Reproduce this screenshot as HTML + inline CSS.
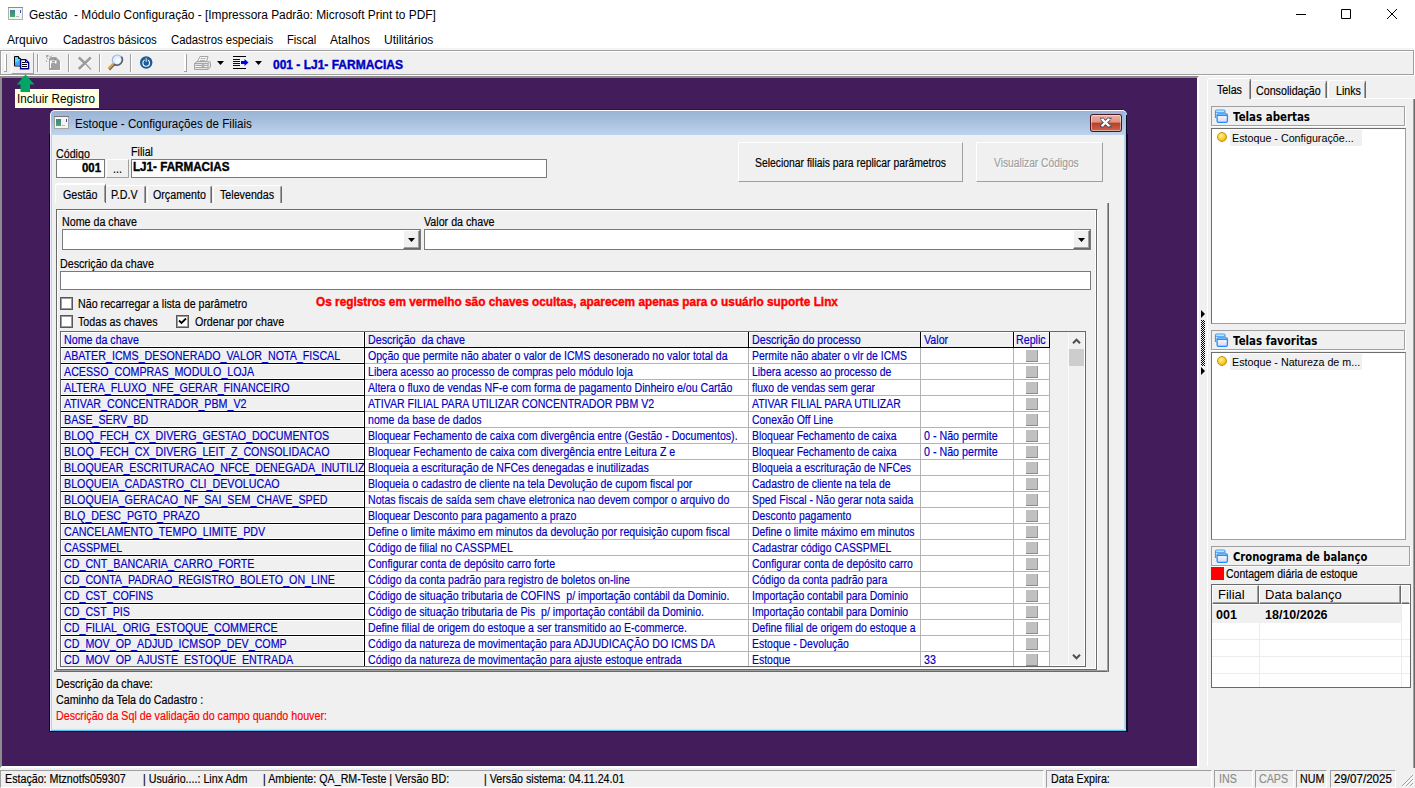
<!DOCTYPE html>
<html lang="pt-BR"><head><meta charset="utf-8"><title>Gestão - Módulo Configuração</title>
<style>
*{box-sizing:border-box}
html,body{margin:0;padding:0}
body{width:1415px;height:788px;overflow:hidden;background:#f0f0f0;position:relative;font-family:"Liberation Sans",sans-serif;font-size:12px;color:#000}
.a{position:absolute}
.s{position:absolute;white-space:pre;font-size:12px;line-height:16px;transform-origin:0 0}
.m{position:absolute;white-space:pre;font-size:12.5px;line-height:14px;transform-origin:0 0;transform:scaleX(.855);color:#000}
.b{color:#0000c4}
.bd{font-weight:bold}
.m{-webkit-text-stroke:.18px}
.m.bd{transform:scaleX(.95);-webkit-text-stroke:.4px}
#tbtxt{transform:scaleX(.96)}#redt{transform:scaleX(.945)}#lj1{transform:scaleX(.932)}#c001{transform:scaleX(.91)}#bsel{transform:scaleX(.83)}#bvis{transform:scaleX(.82)}#apptitle{transform:scaleX(.992)}#wtitle{transform:scaleX(.968)}#tip{transform:scaleX(.975)}
.sep{position:absolute;width:2px;top:54px;height:18px;border-left:1px solid #a0a0a0;border-right:1px solid #fff}
#mdi{left:0;top:76px;width:1199px;height:692px;background:#421c5b;border:2px solid #fff;border-top-color:#8c8c8c;border-left-color:#8c8c8c}
/* child window */
#win{left:50px;top:110px;width:1077px;height:621px;border-radius:5px 5px 0 0;background:#b9d1ea;overflow:hidden}
#ttl{left:0;top:0;width:1077px;height:25px;background:linear-gradient(#9ab4d4 0,#a6bfdd 40%,#bdd4ed 100%);border-top:1px solid #fff;border-left:1px solid #f4f8fc;border-radius:5px 5px 0 0}
#cli{left:2px;top:25px;width:1072px;height:594px;background:#f0f0f0}
.inp{position:absolute;background:#fff;border:1px solid #7a7a7a;border-right-color:#7a7a7a;border-bottom-color:#7a7a7a}
.btn{position:absolute;background:#f0f0f0;border:1px solid #fff;border-right-color:#a0a0a0;border-bottom-color:#a0a0a0}
.chk{position:absolute;width:13px;height:13px;background:#fff;border:1px solid #585858;box-shadow:inset 0 0 0 1px #9c9c9c}
/* grid */
#grid{left:60px;top:331px;width:1026px;height:336px;background:#f0f0f0;border:1px solid #696969;overflow:hidden}
.r{position:absolute;left:0;height:16px;width:991px}
.c{position:absolute;top:0;height:16px;overflow:hidden;background:#fff;border-right:1px solid #b4b4b4;border-bottom:1px solid #b4b4b4}
.c .m{top:1px;left:3px}
.c1{left:0;width:304px;background:#f0f0f0;border-right:1px solid #000;border-bottom:1px solid #000;box-shadow:inset 0 0 0 1px #fff}
.c1 .m{left:3px}
.c2{left:304px;width:384px}
.c2 .m{transform:scaleX(.847)}
.c3 .m{transform:scaleX(.835)}
.c3{left:688px;width:172px}
.c4{left:860px;width:93px}
.c5{left:953px;width:36px}
.ck{position:absolute;left:12px;top:2px;width:12px;height:12px;background:#c0c0c0;border-right:1px solid #9a9a9a;border-bottom:1px solid #8a8a8a}
.h{position:absolute;top:0;height:16px;background:#f0f0f0;border-right:1px solid #000;border-bottom:1px solid #000;overflow:hidden;box-shadow:inset 1px 1px 0 #fff}
.h .m{top:1px;left:3px}
/* right panel */
.hd{position:absolute;left:1211px;width:194px;height:20px;background:#f0f0f0;border:1px solid #a0a0a0;box-shadow:1px 1px 0 #fff}
.hd b{position:absolute;left:21px;top:2px;font-size:12px;line-height:16px;white-space:pre;font-family:"DejaVu Sans","Liberation Sans",sans-serif;font-weight:bold;transform-origin:0 0;transform:scaleX(.855)}
.lst{position:absolute;left:1211px;width:195px;background:#fff;border:1px solid #6d6d6d;border-right-color:#a0a0a0;border-bottom-color:#a0a0a0}
.it{position:absolute;left:18px;top:1px;width:132px;height:16px;background:#f0f0f0}
.it span{position:absolute;left:2px;top:0;font-size:11px;line-height:16px;white-space:pre;transform-origin:0 0;transform:scaleX(.975)}
.ball{position:absolute;left:5px;top:3px;width:10px;height:10px;border-radius:50%;background:radial-gradient(circle at 40% 35%,#fff3a0 0,#ffd22e 45%,#e0a000 100%);border:1px solid #c89010}
.sp{position:absolute;background:#f0f0f0;border:1px solid #a0a0a0;border-right-color:#fff;border-bottom-color:#fff;height:17px;top:771px}
.sp .m{top:1px;left:4px}
</style></head><body>
<!-- title bar -->
<div class="a" style="left:0;top:0;width:1415px;height:50px;background:#fff;border-bottom:2px solid #f4f4f4"></div>
<svg class="a" style="left:8px;top:7px" width="15" height="13" viewBox="0 0 15 13"><rect x=".5" y=".5" width="14" height="12" fill="#f4f4f4" stroke="#b0b0b0"/><rect x="0" y="0" width="15" height="1" fill="#8c8c8c"/><defs><linearGradient id="ig" x1="0" y1="0" x2="0" y2="1"><stop offset="0" stop-color="#3b7f9c"/><stop offset="1" stop-color="#4da860"/></linearGradient></defs><rect x="2" y="3" width="5" height="7" fill="url(#ig)"/><rect x="12" y="3" width="1" height="3" fill="#2a58b8"/><rect x="8" y="9" width="3" height="1" fill="#b8b8b8"/></svg>
<span class="s" id="apptitle" style="left:29px;top:7px">Gestão  - Módulo Configuração - [Impressora Padrão: Microsoft Print to PDF]</span>
<svg class="a" style="left:1290px;top:4px" width="120" height="20" viewBox="0 0 120 20"><path d="M6 10.500h10M51.500 5.500h9v9h-9zM97 5l10 10M107 5l-10 10" fill="none" stroke="#000" stroke-width="1"/></svg>
<!-- menu -->
<span class="s" style="left:7px;top:32px">Arquivo</span>
<span class="s" style="left:63px;top:32px;transform:scaleX(.95)">Cadastros básicos</span>
<span class="s" style="left:171px;top:32px;transform:scaleX(.945)">Cadastros especiais</span>
<span class="s" style="left:287px;top:32px;transform:scaleX(.93)">Fiscal</span>
<span class="s" style="left:330px;top:32px">Atalhos</span>
<span class="s" style="left:384px;top:32px">Utilitários</span>
<!-- toolbar -->
<div class="a" style="left:0;top:50px;width:1415px;height:28px;background:#f0f0f0;border-top:1px solid #a0a0a0;border-left:1px solid #a0a0a0"></div>
<div class="a" style="left:1px;top:51px;width:1414px;height:1px;background:#fff"></div>
<div class="a" style="left:1px;top:51px;width:1px;height:23px;background:#fff"></div>
<div class="a" style="left:0;top:74px;width:1414px;height:1px;background:#a0a0a0"></div>
<div class="a" style="left:1413px;top:50px;width:1px;height:25px;background:#a0a0a0"></div>
<div class="a" style="left:1414px;top:50px;width:1px;height:26px;background:#fff"></div>
<div class="a" style="left:0;top:75px;width:1415px;height:1px;background:#fff"></div>
<!-- toolbar grips -->
<div class="a" style="left:4px;top:54px;width:3px;height:18px;background:#fff;border-right:1px solid #a0a0a0;border-bottom:1px solid #a0a0a0"></div>
<div class="a" style="left:184px;top:54px;width:3px;height:18px;background:#fff;border-right:1px solid #a0a0a0;border-bottom:1px solid #a0a0a0"></div>
<!-- hot button -->
<div class="a" style="left:11px;top:52px;width:23px;height:22px;border:1px solid #fff;border-right-color:#a0a0a0;border-bottom-color:#a0a0a0"></div>
<svg class="a" style="left:13px;top:55px" width="18" height="16" viewBox="0 0 18 16"><path d="M1.500 1.500h4l2 2v7.500h-6z" fill="#4fe0ff" stroke="#000"/><path d="M2 8l5-3v5.500h-5z" fill="#48a4f4"/><path d="M5.500 1.500v2h2" fill="#fff" stroke="#000"/><path d="M7.600 4.600h5l3 3v6.100h-8z" fill="#fff" stroke="#00008c" stroke-width="1.400"/><path d="M12.500 4.500v3h3" fill="none" stroke="#00008c" stroke-width="1"/><path d="M9 7.500h3M9 9.500h5M9 11.500h5" stroke="#000" stroke-width="1"/></svg>
<div class="sep" style="left:37px"></div>
<svg class="a" style="left:45px;top:54px" width="17" height="18" viewBox="0 0 17 18"><path d="M5 17V5l2.500-1h4.500l4 4v9z" fill="#fff"/><path d="M4 16V4l2.500-1h4.500l4 4v9z" fill="#a0a0a0"/><path d="M5 14V6.500h6.500v3h-1.500v-1h-3.500v1h-.5v4.500z" fill="#fff"/><path d="M7 7.500h3" stroke="#a0a0a0"/><path d="M9 4.500h2v1.500h-2z" fill="#8c8c8c"/><path d="M1.500 1.500h1.500v1h-1.500zM4 1.500l1.500 1.500M1.500 3.500l1.500 1.500M1.500 6.500v1.500M7.500 1.500l-1 1" stroke="#a0a0a0" fill="none"/></svg>
<div class="sep" style="left:68px"></div>
<svg class="a" style="left:77px;top:56px" width="16" height="16" viewBox="0 0 16 16"><path d="M14.500 2.500l-12 11.500M2.500 2.500l6 5.500" stroke="#fff" stroke-width="2.600" fill="none"/><path d="M13.800 1.500l-12 11.500M1.800 1.500l6.200 5.700" stroke="#9c9c9c" stroke-width="2.600" fill="none"/><path d="M8 7.200l6 6.300" stroke="#9c9c9c" stroke-width="1.300" fill="none"/></svg>
<div class="sep" style="left:99px"></div>
<svg class="a" style="left:106px;top:54px" width="18" height="18" viewBox="0 0 18 18"><path d="M3.200 15.600l5.300-5.400" stroke="#6c6c80" stroke-width="2.600" stroke-linecap="butt"/><path d="M2.400 14.600l5.300-5.400" stroke="#f4a030" stroke-width="2.200" stroke-linecap="butt"/><circle cx="11.300" cy="6" r="5" fill="#d8f0ff" stroke="#a8b4e0" stroke-width="1.200"/><path d="M15.400 2.600A5.400 5.400 0 0 1 7.900 10.100" fill="none" stroke="#585868" stroke-width="1.500"/><circle cx="11.800" cy="6.600" r="2.600" fill="#f4fcff"/></svg>
<div class="sep" style="left:130px"></div>
<svg class="a" style="left:139px;top:55px" width="15" height="15" viewBox="0 0 15 15"><circle cx="7.200" cy="7.500" r="6.200" fill="#1c5a98"/><circle cx="7.200" cy="8" r="3.300" fill="none" stroke="#fff" stroke-width="1.100"/><path d="M7.200 2.500v5.500" stroke="#1c5a98" stroke-width="3"/><path d="M7.200 2.800v4.400" stroke="#cfe4f4" stroke-width="1"/></svg>
<svg class="a" style="left:193px;top:55px" width="19" height="16" viewBox="0 0 19 16"><path d="M4.500 6.500l2.500-5h8l-1.500 5" fill="#f6f6f6" stroke="#a4a4a4"/><path d="M7.500 3.500h5M7 5.500h5" stroke="#b4b4b4"/><path d="M1.500 8.500l2.500-2h11.500l2 1.500v4l-2.500 2.500h-13.500z" fill="#e4e4e4" stroke="#a4a4a4"/><path d="M1.500 8.500h13.500l2.500-2M15 8.500v6" fill="none" stroke="#a4a4a4"/><path d="M2.500 10.500h12M2.500 12.500h12" stroke="#a4a4a4"/><path d="M9 9h2v3h-2z" fill="#b0b0b0"/><path d="M2.500 11.500h5M12 11.500h2" stroke="#fff"/></svg>
<svg class="a" style="left:217px;top:61px" width="7" height="4" viewBox="0 0 7 4"><path d="M0 0h7l-3.500 4z" fill="#000"/></svg>
<svg class="a" style="left:233px;top:56px" width="16" height="14" viewBox="0 0 16 14"><path d="M0 .5h13M0 12.500h13" stroke="#000"/><path d="M0 3.500h7M0 5.500h7M0 7.500h7M0 9.500h7" stroke="#00008c"/><path d="M8 5h3.500v-2l4 3.500-4 3.500v-2h-3.500z" fill="#0000f0"/></svg>
<svg class="a" style="left:255px;top:61px" width="7" height="4" viewBox="0 0 7 4"><path d="M0 0h7l-3.500 4z" fill="#000"/></svg>
<span class="m b bd" id="tbtxt" style="left:273px;top:58px">001 - LJ1- FARMACIAS</span>
<!-- MDI -->
<div class="a" id="mdi"></div>
<div class="a" style="left:15px;top:89px;width:84px;height:19px;background:#ffffe1"></div>
<span class="s" style="left:17px;top:91px" id="tip">Incluir Registro</span>
<svg class="a" style="left:16px;top:74px" width="20" height="18" viewBox="0 0 20 18"><path d="M9.500 .5L18.500 10.500H14V18H4.500V10.500H.8z" fill="#03a564"/></svg>
<!-- child window -->
<div class="a" style="left:49px;top:134px;width:1079px;height:598px;background:#0c0c20"></div>
<div class="a" style="left:54px;top:109px;width:1069px;height:1px;background:#2c1440"></div>
<div class="a" id="win">
 <div class="a" id="ttl"></div>
 <div class="a" style="left:1075px;top:3px;width:1px;height:618px;background:#6ee0ff"></div>
 <div class="a" style="left:1076px;top:5px;width:1px;height:616px;background:#0c0c20"></div>
 <div class="a" style="left:0;top:619px;width:1076px;height:1px;background:#c6e4f6"></div>
 <div class="a" style="left:0;top:620px;width:1076px;height:1px;background:#54c4ee"></div>
 <div class="a" style="left:0;top:25px;width:1px;height:596px;background:#e6f0fa"></div>
 <div class="a" id="cli"></div>
</div>
<svg class="a" style="left:54px;top:116px" width="15" height="13" viewBox="0 0 15 13"><rect x=".5" y=".5" width="14" height="12" fill="#f4f4f4" stroke="#a4a4a4"/><rect x="0" y="0" width="15" height="1" fill="#787878"/><rect x="2" y="3" width="5" height="7" fill="url(#ig)"/><rect x="12" y="3" width="1" height="3" fill="#2a58b8"/><rect x="8" y="9" width="3" height="1" fill="#b8b8b8"/></svg>
<span class="s" id="wtitle" style="left:75px;top:116px">Estoque - Configurações de Filiais</span>
<!-- close button -->
<div class="a" style="left:1090px;top:114px;width:32px;height:18px;border-radius:3px;background:#4a1524"></div>
<div class="a" style="left:1091px;top:115px;width:30px;height:16px;border-radius:2px;background:linear-gradient(#eab0a4 0,#e09482 45%,#bb3e24 50%,#c9644e 100%);box-shadow:inset 0 0 0 1px rgba(255,255,255,.45)"></div>
<svg class="a" style="left:1099px;top:117px" width="14" height="12" viewBox="0 0 14 12"><path d="M2.800 2l7.400 7M10.200 2l-7.400 7" stroke="#3c4258" stroke-width="3.800" stroke-linecap="butt"/><path d="M1.200 1.500h3.400M9 1.500h3.400M1.200 9.500h3.400M9 9.500h3.400" stroke="#3c4258" stroke-width="1.400"/><path d="M3 2.200l7 6.600M10 2.200l-7 6.600" stroke="#fff" stroke-width="2.300" stroke-linecap="butt"/><path d="M2 2.200h2.800M8.600 2.200h2.800M2 8.800h2.800M8.600 8.800h2.800" stroke="#fff" stroke-width="1"/></svg>
<!-- code / filial -->
<span class="m" style="left:56px;top:147px">Código</span>
<span class="m" style="left:131px;top:145px">Filial</span>
<div class="inp" style="left:56px;top:159px;width:49px;height:19px"></div>
<span class="m bd" id="c001" style="left:82px;top:161px">001</span>
<div class="btn" style="left:106px;top:159px;width:23px;height:19px"></div>
<span class="m" style="left:113px;top:162px">...</span>
<div class="inp" style="left:131px;top:159px;width:416px;height:19px"></div>
<span class="m bd" id="lj1" style="left:133px;top:160px">LJ1- FARMACIAS</span>
<!-- big buttons -->
<div class="btn" style="left:738px;top:142px;width:225px;height:40px"></div>
<span class="m" id="bsel" style="left:755px;top:156px">Selecionar filiais para replicar parâmetros</span>
<div class="btn" style="left:976px;top:142px;width:127px;height:40px"></div>
<span class="m" id="bvis" style="left:994px;top:156px;color:#a0a0a0;text-shadow:1px 1px 0 #fff">Visualizar Códigos</span>
<!-- tabs -->
<div class="a" style="left:54px;top:670px;width:1055px;height:2px;border-top:1px solid #a0a0a0;border-bottom:1px solid #696969"></div>
<div class="a" style="left:1107px;top:203px;width:2px;height:469px;border-left:1px solid #a0a0a0;border-right:1px solid #696969"></div>
<div class="a" style="left:56px;top:209px;width:1042px;height:461px;border:1px solid #696969;border-right:1px solid #fff;border-bottom:none"></div>
<div class="a" style="left:56px;top:209px;width:1041px;height:461px;border:1px solid #696969;box-shadow:inset 0 0 0 1px #fff"></div>
<div class="a" style="left:55px;top:183px;width:51px;height:20px;background:#f0f0f0;border-top:2px solid #fff;border-left:1px solid #fff;border-right:1px solid #696969;border-radius:3px 3px 0 0"></div>
<div class="a" style="left:104px;top:186px;width:1px;height:16px;background:#a0a0a0"></div>
<div class="a" style="left:106px;top:185px;width:40px;height:18px;border-top:1px solid #fff;border-right:1px solid #696969;border-radius:3px 3px 0 0"></div>
<div class="a" style="left:144px;top:187px;width:1px;height:16px;background:#a0a0a0"></div>
<div class="a" style="left:147px;top:185px;width:65px;height:18px;border-top:1px solid #fff;border-left:1px solid #fff;border-right:1px solid #696969;border-radius:3px 3px 0 0"></div>
<div class="a" style="left:210px;top:187px;width:1px;height:16px;background:#a0a0a0"></div>
<div class="a" style="left:213px;top:185px;width:69px;height:18px;border-top:1px solid #fff;border-left:1px solid #fff;border-right:1px solid #696969;border-radius:3px 3px 0 0"></div>
<div class="a" style="left:280px;top:187px;width:1px;height:16px;background:#a0a0a0"></div>
<span class="m" style="left:63px;top:188px">Gestão</span>
<span class="m" style="left:111px;top:188px">P.D.V</span>
<span class="m" style="left:153px;top:188px">Orçamento</span>
<span class="m" style="left:220px;top:188px">Televendas</span>
<!-- filters -->
<span class="m" style="left:62px;top:215px">Nome da chave</span>
<span class="m" style="left:424px;top:215px">Valor da chave</span>
<div class="inp" style="left:62px;top:229px;width:359px;height:21px"></div>
<div class="a" style="left:403px;top:230px;width:17px;height:19px;background:#f0f0f0;border:1px solid #fff;border-right:1px solid #696969;border-bottom:1px solid #696969;box-shadow:inset -1px -1px 0 #a0a0a0"></div>
<svg class="a" style="left:408px;top:238px" width="7" height="4" viewBox="0 0 7 4"><path d="M0 0h7l-3.500 4z"/></svg>
<div class="inp" style="left:424px;top:229px;width:667px;height:21px"></div>
<div class="a" style="left:1073px;top:230px;width:17px;height:19px;background:#f0f0f0;border:1px solid #fff;border-right:1px solid #696969;border-bottom:1px solid #696969;box-shadow:inset -1px -1px 0 #a0a0a0"></div>
<svg class="a" style="left:1078px;top:238px" width="7" height="4" viewBox="0 0 7 4"><path d="M0 0h7l-3.500 4z"/></svg>
<span class="m" style="left:60px;top:257px">Descrição da chave</span>
<div class="inp" style="left:60px;top:271px;width:1031px;height:19px"></div>
<div class="chk" style="left:60px;top:297px"></div>
<span class="m" style="left:78px;top:297px">Não recarregar a lista de parâmetro</span>
<span class="m bd" id="redt" style="left:316px;top:295px;color:#ff0000">Os registros em vermelho são chaves ocultas, aparecem apenas para o usuário suporte Linx</span>
<div class="chk" style="left:60px;top:315px"></div>
<span class="m" style="left:78px;top:315px">Todas as chaves</span>
<div class="chk" style="left:176px;top:315px"></div>
<svg class="a" style="left:178px;top:317px" width="9" height="9" viewBox="0 0 9 9"><path d="M1 3.500l2.500 2.500L8 1.500" fill="none" stroke="#000" stroke-width="1.800"/></svg>
<span class="m" style="left:195px;top:315px">Ordenar por chave</span>
<!-- grid -->
<div class="a" id="grid">
 <span class="h" style="left:0;width:304px;box-shadow:inset 0 0 0 1px #fff"><span class="m b" style="left:3px">Nome da chave</span></span>
 <span class="h" style="left:304px;width:384px"><span class="m b">Descrição  da chave</span></span>
 <span class="h" style="left:688px;width:172px"><span class="m b">Descrição do processo</span></span>
 <span class="h" style="left:860px;width:93px"><span class="m b">Valor</span></span>
 <span class="h" style="left:953px;width:36px"><span class="m b" style="left:2px">Replic</span></span>
<div class="r" style="top:16px"><span class="c c1"><span class="m b">ABATER_ICMS_DESONERADO_VALOR_NOTA_FISCAL</span></span><span class="c c2"><span class="m b">Opção que permite não abater o valor de ICMS desonerado no valor total da</span></span><span class="c c3"><span class="m b">Permite não abater o vlr de ICMS</span></span><span class="c c4"><span class="m b"></span></span><span class="c c5"><i class="ck"></i></span></div>
<div class="r" style="top:32px"><span class="c c1"><span class="m b">ACESSO_COMPRAS_MODULO_LOJA</span></span><span class="c c2"><span class="m b">Libera acesso ao processo de compras pelo módulo loja</span></span><span class="c c3"><span class="m b">Libera acesso ao processo de</span></span><span class="c c4"><span class="m b"></span></span><span class="c c5"><i class="ck"></i></span></div>
<div class="r" style="top:48px"><span class="c c1"><span class="m b">ALTERA_FLUXO_NFE_GERAR_FINANCEIRO</span></span><span class="c c2"><span class="m b">Altera o fluxo de vendas NF-e com forma de pagamento Dinheiro e/ou Cartão</span></span><span class="c c3"><span class="m b">fluxo de vendas sem gerar</span></span><span class="c c4"><span class="m b"></span></span><span class="c c5"><i class="ck"></i></span></div>
<div class="r" style="top:64px"><span class="c c1"><span class="m b">ATIVAR_CONCENTRADOR_PBM_V2</span></span><span class="c c2"><span class="m b">ATIVAR FILIAL PARA UTILIZAR CONCENTRADOR PBM V2</span></span><span class="c c3"><span class="m b">ATIVAR FILIAL PARA UTILIZAR</span></span><span class="c c4"><span class="m b"></span></span><span class="c c5"><i class="ck"></i></span></div>
<div class="r" style="top:80px"><span class="c c1"><span class="m b">BASE_SERV_BD</span></span><span class="c c2"><span class="m b">nome da base de dados</span></span><span class="c c3"><span class="m b">Conexão Off Line</span></span><span class="c c4"><span class="m b"></span></span><span class="c c5"><i class="ck"></i></span></div>
<div class="r" style="top:96px"><span class="c c1"><span class="m b">BLOQ_FECH_CX_DIVERG_GESTAO_DOCUMENTOS</span></span><span class="c c2"><span class="m b">Bloquear Fechamento de caixa com divergência entre (Gestão - Documentos).</span></span><span class="c c3"><span class="m b">Bloquear Fechamento de caixa</span></span><span class="c c4"><span class="m b">0 - Não permite</span></span><span class="c c5"><i class="ck"></i></span></div>
<div class="r" style="top:112px"><span class="c c1"><span class="m b">BLOQ_FECH_CX_DIVERG_LEIT_Z_CONSOLIDACAO</span></span><span class="c c2"><span class="m b">Bloquear Fechamento de caixa com divergência entre Leitura Z e</span></span><span class="c c3"><span class="m b">Bloquear Fechamento de caixa</span></span><span class="c c4"><span class="m b">0 - Não permite</span></span><span class="c c5"><i class="ck"></i></span></div>
<div class="r" style="top:128px"><span class="c c1"><span class="m b">BLOQUEAR_ESCRITURACAO_NFCE_DENEGADA_INUTILIZADA</span></span><span class="c c2"><span class="m b">Bloqueia a escrituração de NFCes denegadas e inutilizadas</span></span><span class="c c3"><span class="m b">Bloqueia a escrituração de NFCes</span></span><span class="c c4"><span class="m b"></span></span><span class="c c5"><i class="ck"></i></span></div>
<div class="r" style="top:144px"><span class="c c1"><span class="m b">BLOQUEIA_CADASTRO_CLI_DEVOLUCAO</span></span><span class="c c2"><span class="m b">Bloqueia o cadastro de cliente na tela Devolução de cupom fiscal por</span></span><span class="c c3"><span class="m b">Cadastro de cliente na tela de</span></span><span class="c c4"><span class="m b"></span></span><span class="c c5"><i class="ck"></i></span></div>
<div class="r" style="top:160px"><span class="c c1"><span class="m b">BLOQUEIA_GERACAO_NF_SAI_SEM_CHAVE_SPED</span></span><span class="c c2"><span class="m b">Notas fiscais de saída sem chave eletronica nao devem compor o arquivo do</span></span><span class="c c3"><span class="m b">Sped Fiscal - Não gerar nota saida</span></span><span class="c c4"><span class="m b"></span></span><span class="c c5"><i class="ck"></i></span></div>
<div class="r" style="top:176px"><span class="c c1"><span class="m b">BLQ_DESC_PGTO_PRAZO</span></span><span class="c c2"><span class="m b">Bloquear Desconto para pagamento a prazo</span></span><span class="c c3"><span class="m b">Desconto pagamento</span></span><span class="c c4"><span class="m b"></span></span><span class="c c5"><i class="ck"></i></span></div>
<div class="r" style="top:192px"><span class="c c1"><span class="m b">CANCELAMENTO_TEMPO_LIMITE_PDV</span></span><span class="c c2"><span class="m b">Define o limite máximo em minutos da devolução por requisição cupom fiscal</span></span><span class="c c3"><span class="m b">Define o limite máximo em minutos</span></span><span class="c c4"><span class="m b"></span></span><span class="c c5"><i class="ck"></i></span></div>
<div class="r" style="top:208px"><span class="c c1"><span class="m b">CASSPMEL</span></span><span class="c c2"><span class="m b">Código de filial no CASSPMEL</span></span><span class="c c3"><span class="m b">Cadastrar código CASSPMEL</span></span><span class="c c4"><span class="m b"></span></span><span class="c c5"><i class="ck"></i></span></div>
<div class="r" style="top:224px"><span class="c c1"><span class="m b">CD_CNT_BANCARIA_CARRO_FORTE</span></span><span class="c c2"><span class="m b">Configurar conta de depósito carro forte</span></span><span class="c c3"><span class="m b">Configurar conta de depósito carro</span></span><span class="c c4"><span class="m b"></span></span><span class="c c5"><i class="ck"></i></span></div>
<div class="r" style="top:240px"><span class="c c1"><span class="m b">CD_CONTA_PADRAO_REGISTRO_BOLETO_ON_LINE</span></span><span class="c c2"><span class="m b">Código da conta padrão para registro de boletos on-line</span></span><span class="c c3"><span class="m b">Código da conta padrão para</span></span><span class="c c4"><span class="m b"></span></span><span class="c c5"><i class="ck"></i></span></div>
<div class="r" style="top:256px"><span class="c c1"><span class="m b">CD_CST_COFINS</span></span><span class="c c2"><span class="m b">Código de situação tributaria de COFINS  p/ importação contábil da Dominio.</span></span><span class="c c3"><span class="m b">Importação contabil para Dominio</span></span><span class="c c4"><span class="m b"></span></span><span class="c c5"><i class="ck"></i></span></div>
<div class="r" style="top:272px"><span class="c c1"><span class="m b">CD_CST_PIS</span></span><span class="c c2"><span class="m b">Código de situação tributaria de Pis  p/ importação contábil da Dominio.</span></span><span class="c c3"><span class="m b">Importação contabil para Dominio</span></span><span class="c c4"><span class="m b"></span></span><span class="c c5"><i class="ck"></i></span></div>
<div class="r" style="top:288px"><span class="c c1"><span class="m b">CD_FILIAL_ORIG_ESTOQUE_COMMERCE</span></span><span class="c c2"><span class="m b">Define filial de origem do estoque a ser transmitido ao E-commerce.</span></span><span class="c c3"><span class="m b">Define filial de origem do estoque a</span></span><span class="c c4"><span class="m b"></span></span><span class="c c5"><i class="ck"></i></span></div>
<div class="r" style="top:304px"><span class="c c1"><span class="m b">CD_MOV_OP_ADJUD_ICMSOP_DEV_COMP</span></span><span class="c c2"><span class="m b">Código da natureza de movimentação para ADJUDICAÇÃO DO ICMS DA</span></span><span class="c c3"><span class="m b">Estoque - Devolução</span></span><span class="c c4"><span class="m b"></span></span><span class="c c5"><i class="ck"></i></span></div>
<div class="r" style="top:320px"><span class="c c1"><span class="m b">CD_MOV_OP_AJUSTE_ESTOQUE_ENTRADA</span></span><span class="c c2"><span class="m b">Código da natureza de movimentação para ajuste estoque entrada</span></span><span class="c c3"><span class="m b">Estoque</span></span><span class="c c4"><span class="m b">33</span></span><span class="c c5"><i class="ck"></i></span></div> <!-- scrollbar -->
 <div class="a" style="left:1007px;top:0;width:17px;height:334px;background:#f0f0f0;border-left:1px solid #fafafa"></div>
 <div class="a" style="left:989px;top:333px;width:35px;height:1px;background:#fff"></div>
 <div class="a" style="left:1023px;top:0;width:1px;height:334px;background:#fff"></div>
 <div class="a" style="left:1008px;top:17px;width:15px;height:17px;background:#cdcdcd"></div>
 <svg class="a" style="left:1011px;top:6px" width="9" height="6" viewBox="0 0 9 6"><path d="M1 5.200l3.500-3.500L8 5.200" fill="none" stroke="#505050" stroke-width="2"/></svg>
 <svg class="a" style="left:1011px;top:322px" width="9" height="6" viewBox="0 0 9 6"><path d="M1 .8l3.500 3.500L8 .8" fill="none" stroke="#505050" stroke-width="2"/></svg>
</div>
<span class="m" style="left:56px;top:677px">Descrição da chave:</span>
<span class="m" style="left:56px;top:693px">Caminho da Tela do Cadastro :</span>
<span class="m" style="left:56px;top:709px;color:#ff0000">Descrição da Sql de validação do campo quando houver:</span>
<!-- right panel -->
<!-- splitter -->
<svg class="a" style="left:1200px;top:309px" width="6" height="70" viewBox="0 0 6 70"><defs><pattern id="dp" width="2" height="2" patternUnits="userSpaceOnUse"><rect width="1" height="1" fill="#000"/><rect x="1" y="1" width="1" height="1" fill="#000"/></pattern></defs><path d="M1 1l4 4-4 4zM1 58l4 4-4 4z" fill="#000"/><rect x="1" y="11" width="4" height="46" fill="url(#dp)"/></svg>
<!-- tabs -->
<div class="a" style="left:1413px;top:98px;width:2px;height:670px;border-left:1px solid #a0a0a0;border-right:1px solid #696969"></div>
<div class="a" style="left:1207px;top:98px;width:208px;height:668px;border-top:1px solid #fff;border-left:1px solid #fff"></div>
<div class="a" style="left:1207px;top:78px;width:44px;height:21px;background:#f0f0f0;border-top:1px solid #fff;border-left:1px solid #fff;border-right:1px solid #696969;border-radius:3px 3px 0 0"></div>
<div class="a" style="left:1249px;top:81px;width:1px;height:18px;background:#a0a0a0"></div>
<div class="a" style="left:1251px;top:80px;width:76px;height:18px;border-top:1px solid #fff;border-right:1px solid #696969;border-radius:3px 3px 0 0"></div>
<div class="a" style="left:1325px;top:83px;width:1px;height:15px;background:#a0a0a0"></div>
<div class="a" style="left:1328px;top:80px;width:38px;height:18px;border-top:1px solid #fff;border-left:1px solid #fff;border-right:1px solid #696969;border-radius:3px 3px 0 0"></div>
<div class="a" style="left:1364px;top:83px;width:1px;height:15px;background:#a0a0a0"></div>
<span class="m" style="left:1217px;top:83px">Telas</span>
<span class="m" style="left:1256px;top:84px">Consolidação</span>
<span class="m" style="left:1336px;top:84px">Links</span>
<!-- section 1 -->
<div class="hd" style="top:106px"><b>Telas abertas</b></div>
<svg class="a ico" style="left:1213px;top:108px" width="16" height="16" viewBox="0 0 16 16"><path d="M2.500 10V3.500a1.500 1.500 0 0 1 1.500-1.500h6.500a1.500 1.500 0 0 1 1.500 1.500V5" fill="none" stroke="#3a9cf6" stroke-width="1.200"/><path d="M2.500 4.300h9" stroke="#3a9cf6" stroke-width="1"/><defs><linearGradient id="wg" x1="0" y1="0" x2="0" y2="1"><stop offset="0" stop-color="#fff"/><stop offset="1" stop-color="#d4d4f6"/></linearGradient></defs><rect x="4.100" y="5.800" width="10.300" height="8.600" rx="1.600" fill="url(#wg)" stroke="#1e8ef8" stroke-width="1.300"/><path d="M4.500 7.400h9.500" stroke="#1e8ef8" stroke-width="1.200"/></svg>
<div class="lst" style="top:128px;height:196px"><i class="ball"></i><div class="it"><span>Estoque - Configuraçõe...</span></div></div>
<!-- section 2 -->
<div class="hd" style="top:330px"><b>Telas favoritas</b></div>
<svg class="a ico" style="left:1213px;top:332px" width="16" height="16" viewBox="0 0 16 16"><path d="M2.500 10V3.500a1.500 1.500 0 0 1 1.500-1.500h6.500a1.500 1.500 0 0 1 1.500 1.500V5" fill="none" stroke="#3a9cf6" stroke-width="1.200"/><path d="M2.500 4.300h9" stroke="#3a9cf6" stroke-width="1"/><defs><linearGradient id="wg" x1="0" y1="0" x2="0" y2="1"><stop offset="0" stop-color="#fff"/><stop offset="1" stop-color="#d4d4f6"/></linearGradient></defs><rect x="4.100" y="5.800" width="10.300" height="8.600" rx="1.600" fill="url(#wg)" stroke="#1e8ef8" stroke-width="1.300"/><path d="M4.500 7.400h9.500" stroke="#1e8ef8" stroke-width="1.200"/></svg>
<div class="lst" style="top:352px;height:188px"><i class="ball"></i><div class="it"><span>Estoque - Natureza de m...</span></div></div>
<!-- section 3 -->
<div class="hd" style="top:546px;width:199px"><b style="transform:scaleX(.835)">Cronograma de balanço</b></div>
<svg class="a ico" style="left:1213px;top:548px" width="16" height="16" viewBox="0 0 16 16"><path d="M2.500 10V3.500a1.500 1.500 0 0 1 1.500-1.500h6.500a1.500 1.500 0 0 1 1.500 1.500V5" fill="none" stroke="#3a9cf6" stroke-width="1.200"/><path d="M2.500 4.300h9" stroke="#3a9cf6" stroke-width="1"/><defs><linearGradient id="wg" x1="0" y1="0" x2="0" y2="1"><stop offset="0" stop-color="#fff"/><stop offset="1" stop-color="#d4d4f6"/></linearGradient></defs><rect x="4.100" y="5.800" width="10.300" height="8.600" rx="1.600" fill="url(#wg)" stroke="#1e8ef8" stroke-width="1.300"/><path d="M4.500 7.400h9.500" stroke="#1e8ef8" stroke-width="1.200"/></svg>
<div class="a" style="left:1211px;top:567px;width:13px;height:13px;background:#f00"></div>
<span class="m" style="left:1226px;top:567px;transform:scaleX(.838)">Contagem diária de estoque</span>
<div class="a" style="left:1211px;top:584px;width:200px;height:104px;background:#fff;border:1px solid #696969"></div>
<div class="a" style="left:1212px;top:585px;width:47px;height:19px;background:#f0f0f0;border:1px solid #fff;border-right:1px solid #696969;border-bottom:1px solid #696969;box-shadow:inset -1px -1px 0 #a0a0a0"></div>
<div class="a" style="left:1259px;top:585px;width:142px;height:19px;background:#f0f0f0;border:1px solid #fff;border-right:1px solid #696969;border-bottom:1px solid #696969;box-shadow:inset -1px -1px 0 #a0a0a0"></div>
<div class="a" style="left:1401px;top:585px;width:9px;height:19px;background:#f0f0f0;border:1px solid #fff;border-bottom:1px solid #696969;box-shadow:inset 0 -1px 0 #a0a0a0"></div>
<span class="s" style="left:1218px;top:587px;font-size:13px">Filial</span>
<span class="s" style="left:1265px;top:587px;font-size:13px">Data balanço</span>
<div class="a" style="left:1212px;top:605px;width:190px;height:18px;background:#f0f0f0"></div>
<span class="s bd" style="left:1216px;top:607px;font-size:12.500px">001</span>
<span class="s bd" style="left:1265px;top:607px;font-size:12.500px">18/10/2026</span>
<div class="a" style="left:1212px;top:639px;width:198px;height:1px;background:#ececec"></div>
<div class="a" style="left:1212px;top:656px;width:198px;height:1px;background:#ececec"></div>
<div class="a" style="left:1212px;top:673px;width:198px;height:1px;background:#ececec"></div>
<div class="a" style="left:1259px;top:623px;width:1px;height:64px;background:#ececec"></div>
<div class="a" style="left:1401px;top:605px;width:1px;height:82px;background:#ececec"></div>
<!-- status bar -->
<div class="a" style="left:0;top:768px;width:1415px;height:20px;background:#f0f0f0"></div>
<div class="sp" style="left:0;width:1044px;top:770px;height:18px"></div>
<span class="m" style="left:5px;top:772px">Estação: Mtznotfs059307</span>
<span class="m" style="left:143px;top:772px">| Usuário....: Linx Adm</span>
<span class="m" style="left:263px;top:772px">| Ambiente: QA_RM-Teste | Versão BD:</span>
<span class="m" style="left:484px;top:772px">| Versão sistema: 04.11.24.01</span>
<div class="sp" style="left:1046px;width:166px;top:770px;height:18px"></div>
<span class="m" style="left:1051px;top:772px">Data Expira:</span>
<div class="sp" style="left:1214px;width:39px;top:770px;height:18px"></div>
<span class="m" style="left:1219px;top:772px;color:#8c8c8c">INS</span>
<div class="sp" style="left:1255px;width:39px;top:770px;height:18px"></div>
<span class="m" style="left:1259px;top:772px;color:#8c8c8c">CAPS</span>
<div class="sp" style="left:1296px;width:31px;top:770px;height:18px"></div>
<span class="m" style="left:1300px;top:772px">NUM</span>
<div class="sp" style="left:1330px;width:66px;top:770px;height:18px"></div>
<span class="m" style="left:1334px;top:772px;transform:scaleX(.925)">29/07/2025</span>
<svg class="a" style="left:1401px;top:774px" width="13" height="13" viewBox="0 0 13 13"><path d="M12 1L1 12M12 5L5 12M12 9L9 12" stroke="#a0a0a0" stroke-width="1"/><path d="M13 2L2 13M13 6L6 13M13 10L10 13" stroke="#fff" stroke-width="1"/></svg>
</body></html>
